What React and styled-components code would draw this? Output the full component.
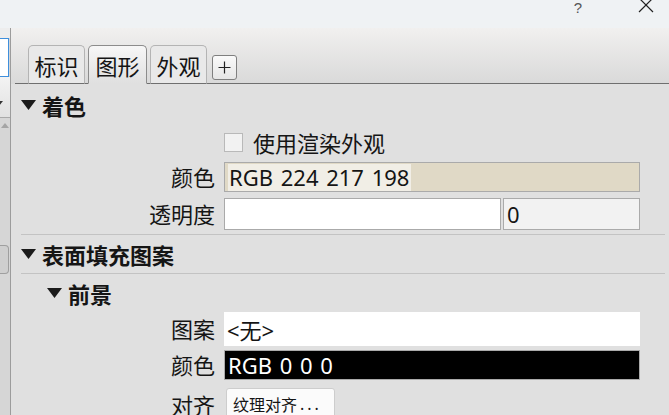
import React from "react";
import styled, { createGlobalStyle } from "styled-components";

const GlobalStyle = createGlobalStyle`
  html, body {
    margin: 0;
    padding: 0;
    overflow: hidden;
    background: #e0e0e0;
  }
  * {
    box-sizing: border-box;
  }
`;

const FONT = `"Noto Sans", "Noto Sans CJK SC", sans-serif`;

const Window = styled.div`
  width: 669px;
  height: 415px;
  display: flex;
  flex-direction: column;
  font-family: ${FONT};
  font-size: 22px;
  color: #151515;
  overflow: hidden;
`;

const TitleBar = styled.div`
  height: 28px;
  flex: none;
  background: #eff2f4;
  display: flex;
  justify-content: flex-end;
  align-items: flex-start;
  padding-right: 15px;
  gap: 56px;
`;

const HelpMark = styled.span`
  font-family: "Liberation Sans", sans-serif;
  font-size: 15px;
  line-height: 1;
  color: #555;
  margin-top: 0;
`;

const Body = styled.div`
  flex: 1;
  display: flex;
  min-height: 0;
`;

/* 왼쪽 좁은 패널 (잘린 부분) */
const Strip = styled.div`
  width: 11px;
  flex: none;
  border-right: 1px solid #9c9c9c;
  background: #d6d6d6;
  display: flex;
  flex-direction: column;
`;

const StripTop = styled.div`
  height: 10px;
  background: #ededed;
`;

const StripInput = styled.div`
  height: 39px;
  background: #fff;
  border: 1px solid #3f8fdc;
  border-left: none;
  margin-right: 1px;
`;

const StripCombo = styled.div`
  height: 41px;
  background: linear-gradient(#f3f3f3, #e1e1e1);
  border-bottom: 1px solid #a9a9a9;
  display: flex;
  align-items: center;
`;

const StripScroll = styled.div`
  flex: 1;
  display: flex;
  flex-direction: column;
  align-items: flex-end;
  padding: 5px 1px 0 0;
`;

const Thumb = styled.div`
  margin-top: 117px;
  width: 9px;
  height: 29px;
  border: 1px solid #9f9f9f;
  border-left: none;
  border-radius: 0 4px 4px 0;
  background: #cfcfcf;
`;

const Main = styled.div`
  flex: 1;
  display: flex;
  flex-direction: column;
  min-width: 0;
`;

const TabHeader = styled.div`
  height: 56px;
  flex: none;
  background: linear-gradient(#f1f0ef, #d9d9d9);
  padding-left: 4px;
  display: flex;
  align-items: flex-end;
`;

const TabBar = styled.div`
  flex: 1;
  height: 39px;
  display: flex;
  align-items: flex-end;
  gap: 3px;
  padding-left: 13px;
  border-bottom: 1px solid #6f6f6f;
`;

const Tab = styled.div`
  height: 39px;
  margin-bottom: -1px;
  display: flex;
  align-items: center;
  justify-content: center;
  white-space: nowrap;
  border: 1px solid ${(p) => (p.$active ? "#8c8c8c" : "#b4b4b4")};
  border-bottom: ${(p) => (p.$active ? "1px solid #e0e0e0" : "1px solid #6f6f6f")};
  border-radius: 5px 5px 0 0;
  background: ${(p) =>
    p.$active ? "linear-gradient(#f7f7f7, #e0e0e0)" : "#e9e9e9"};
  width: ${(p) => (p.$active ? "59px" : "57px")};
`;

const AddButton = styled.div`
  width: 25px;
  height: 25px;
  margin: 0 0 3px 2px;
  border: 1px solid #7f7f7f;
  border-radius: 3px;
  background: linear-gradient(#fafafa, #e6e6e6);
  display: flex;
  align-items: center;
  justify-content: center;
`;

const Content = styled.div`
  flex: 1;
  background: #e0e0e0;
  padding: 4px 4px 0 10px;
  display: flex;
  flex-direction: column;
`;

const SectionHead = styled.div`
  height: ${(p) => p.$h}px;
  padding-left: ${(p) => p.$indent || 0}px;
  display: flex;
  align-items: center;
  gap: 6px;
  font-weight: 700;
  flex: none;
`;

const Separator = styled.div`
  height: 1px;
  flex: none;
  background: #c3c3c3;
  margin-top: ${(p) => p.$mt || 0}px;
`;

const Row = styled.div`
  display: grid;
  grid-template-columns: 194px 416px;
  column-gap: 9px;
  align-items: center;
  height: ${(p) => p.$h}px;
  margin-top: ${(p) => p.$mt || 0}px;
  flex: none;
`;

const Label = styled.div`
  text-align: right;
  line-height: 1;
`;

const Field = styled.div`
  height: 100%;
  display: flex;
  align-items: center;
  padding-left: 3px;
  background: ${(p) => p.$bg || "#fff"};
  color: ${(p) => p.$fg || "#151515"};
  border: ${(p) => (p.$noBorder ? "none" : "1px solid #aaaaaa")};
  white-space: nowrap;
  overflow: hidden;
  word-spacing: 2px;
`;

const Highlight = styled.span`
  background: #f1eee6;
  padding: 0 2px 0 1px;
  line-height: 27px;
`;

const SplitField = styled.div`
  height: 100%;
  display: grid;
  grid-template-columns: 277px 1fr;
  gap: 2px;
`;

const CheckLine = styled.div`
  display: flex;
  align-items: center;
  gap: 10px;
  margin-top: -2px;
`;

const Box = styled.div`
  width: 19px;
  height: 19px;
  border: 1px solid #b9b9b9;
  background: #f2f2f2;
`;

const Button = styled.div`
  width: 109px;
  height: 34px;
  margin-left: 2px;
  align-self: start;
  border: 1px solid #cdcdcd;
  border-radius: 3px;
  background: #fbfbfb;
  display: flex;
  align-items: center;
  padding: 0 0 2px 6px;
  font-size: 16px;
  white-space: nowrap;
  span {
    letter-spacing: 3px;
    margin-left: 3px;
  }
`;

const Triangle = () => (
  <svg width="15" height="10" viewBox="0 0 15 10">
    <polygon points="0,0 15,0 7.5,10" fill="#1b1b1b" />
  </svg>
);

const CloseIcon = () => (
  <svg width="16" height="16" viewBox="0 0 16 16" style={{ marginTop: -3 }}>
    <path d="M1 1 L15 15 M15 1 L1 15" stroke="#222" strokeWidth="1.2" />
  </svg>
);

const PlusIcon = () => (
  <svg width="13" height="13" viewBox="0 0 13 13">
    <path d="M6.5 0.5 V12.5 M0.5 6.5 H12.5" stroke="#222" strokeWidth="1.2" />
  </svg>
);

const SmallArrow = ({ up, color }) => (
  <svg width="8" height="5" viewBox="0 0 8 5">
    <polygon points={up ? "0,5 8,5 4,0" : "0,0 8,0 4,5"} fill={color} />
  </svg>
);

export default function App() {
  return (
    <Window>
      <GlobalStyle />
      <TitleBar>
        <HelpMark>?</HelpMark>
        <CloseIcon />
      </TitleBar>
      <Body>
        <Strip>
          <StripTop />
          <StripInput />
          <StripCombo>
            <div style={{ marginLeft: -5 }}>
              <SmallArrow color="#333" />
            </div>
          </StripCombo>
          <StripScroll>
            <SmallArrow up color="#a5a5a5" />
            <Thumb />
          </StripScroll>
        </Strip>
        <Main>
          <TabHeader>
            <TabBar>
              <Tab>标识</Tab>
              <Tab $active>图形</Tab>
              <Tab>外观</Tab>
              <AddButton>
                <PlusIcon />
              </AddButton>
            </TabBar>
          </TabHeader>
          <Content>
            <SectionHead $h={34}>
              <Triangle />
              着色
            </SectionHead>

            <Row $h={28} $mt={6}>
              <span />
              <CheckLine>
                <Box />
                使用渲染外观
              </CheckLine>
            </Row>

            <Row $h={30} $mt={6}>
              <Label>颜色</Label>
              <Field $bg="#e0d9c6">
                <Highlight>RGB 224 217 198</Highlight>
              </Field>
            </Row>

            <Row $h={29} $mt={6}>
              <Label>透明度</Label>
              <SplitField>
                <Field />
                <Field $bg="#f2f2f2">0</Field>
              </SplitField>
            </Row>

            <Separator $mt={7} />

            <SectionHead $h={38}>
              <Triangle />
              表面填充图案
            </SectionHead>

            <Separator />

            <SectionHead $h={38} $indent={26}>
              <Triangle />
              前景
            </SectionHead>

            <Row $h={34}>
              <Label>图案</Label>
              <Field $noBorder>&lt;无&gt;</Field>
            </Row>

            <Row $h={30} $mt={4}>
              <Label>颜色</Label>
              <Field $bg="#000" $fg="#fff">
                RGB 0 0 0
              </Field>
            </Row>

            <Row $h={34} $mt={8}>
              <Label>对齐</Label>
              <Button>
                纹理对齐<span>...</span>
              </Button>
            </Row>
          </Content>
        </Main>
      </Body>
    </Window>
  );
}
